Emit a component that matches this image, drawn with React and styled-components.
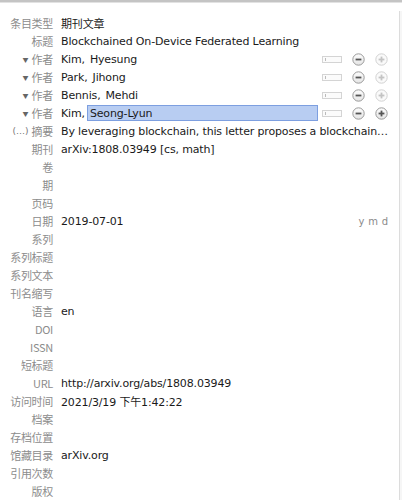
import styled, { createGlobalStyle } from 'styled-components';

const GlobalStyle = createGlobalStyle`
  html, body {
    margin: 0;
    padding: 0;
    background: #ffffff;
  }
  body {
    font-family: "DejaVu Sans", "Noto Sans CJK SC", sans-serif;
  }
`;

const fields = [
    { label: '条目类型', value: '期刊文章' },
    { label: '标题', value: 'Blockchained On-Device Federated Learning' },
    { label: '作者', creator: ['Kim,', 'Hyesung'] },
    { label: '作者', creator: ['Park,', 'Jihong'] },
    { label: '作者', creator: ['Bennis,', 'Mehdi'] },
    { label: '作者', creator: ['Kim,', 'Seong-Lyun'], editing: true, last: true },
    { label: '摘要', prefix: '(…)', value: 'By leveraging blockchain, this letter proposes a blockchain…' },
    { label: '期刊', value: 'arXiv:1808.03949 [cs, math]' },
    { label: '卷' },
    { label: '期' },
    { label: '页码' },
    { label: '日期', value: '2019-07-01', date: true },
    { label: '系列' },
    { label: '系列标题' },
    { label: '系列文本' },
    { label: '刊名缩写' },
    { label: '语言', value: 'en' },
    { label: 'DOI' },
    { label: 'ISSN' },
    { label: '短标题' },
    { label: 'URL', value: 'http://arxiv.org/abs/1808.03949' },
    { label: '访问时间', value: '2021/3/19 下午1:42:22' },
    { label: '档案' },
    { label: '存档位置' },
    { label: '馆藏目录', value: 'arXiv.org' },
    { label: '引用次数' },
    { label: '版权' },
];

const MinusIcon = () => (
    <svg width="13" height="13" viewBox="0 0 13 13">
        <defs>
            <linearGradient id="btnfill" x1="0" y1="0" x2="0" y2="1">
                <stop offset="0" stopColor="#fdfdfd" />
                <stop offset="1" stopColor="#e4e4e4" />
            </linearGradient>
        </defs>
        <circle cx="6.5" cy="6.5" r="5.7" fill="url(#btnfill)" stroke="#9a9a9a" strokeWidth="1" />
        <rect x="3.6" y="5.6" width="5.8" height="1.8" fill="#555" />
    </svg>
);

const PlusIcon = ({ active }) => (
    <svg width="13" height="13" viewBox="0 0 13 13">
        <circle cx="6.5" cy="6.5" r="5.7" fill={active ? 'url(#btnfill)' : '#fafafa'} stroke={active ? '#9a9a9a' : '#d2d2d2'} strokeWidth="1" />
        <rect x="3.6" y="5.6" width="5.8" height="1.8" fill={active ? '#555' : '#c4c4c4'} />
        <rect x="5.6" y="3.6" width="1.8" height="5.8" fill={active ? '#555' : '#c4c4c4'} />
    </svg>
);

export default function App() {
    return (
        <>
            <GlobalStyle />
            <TopBar />
            <Frame>
                <Pane>
                    {fields.map((f, i) => (
                        <Row key={i}>
                            <Label>
                                {f.creator && <Twisty>▼</Twisty>}
                                {f.prefix && <Prefix>{f.prefix}</Prefix>}
                                <LabelText>{f.label}</LabelText>
                            </Label>
                            <Value>
                                {f.creator ? (
                                    <>
                                        <LastName>{f.creator[0]}</LastName>
                                        <FirstName $editing={f.editing}>{f.creator[1]}</FirstName>
                                        <ModeBox />
                                        <IconButton><MinusIcon /></IconButton>
                                        <IconButton><PlusIcon active={f.last} /></IconButton>
                                    </>
                                ) : (
                                    <>
                                        <Text>{f.value}</Text>
                                        {f.date && <DateHint>y m d</DateHint>}
                                    </>
                                )}
                            </Value>
                        </Row>
                    ))}
                </Pane>
                <Gutter />
            </Frame>
        </>
    );
}

const TopBar = styled.div`
    height: 2px;
    background: #c4c4c4;
    border-bottom: 1px solid #e2e2e2;
`;

const Frame = styled.div`
    display: flex;
    width: 402px;
`;

const Pane = styled.div`
    width: 399px;
    padding-top: 11px;
    display: flex;
    flex-direction: column;
`;

const Gutter = styled.div`
    margin-top: 8px;
    width: 2px;
    border-left: 1px solid #dcdcdc;
    background: #f6f6f6;
`;

const Row = styled.div`
    display: flex;
    align-items: center;
    height: 18px;
`;

const Label = styled.div`
    width: 53px;
    flex: none;
    display: flex;
    justify-content: flex-end;
    align-items: center;
    color: #8c8c8c;
    font-size: 11px;
    font-family: "Noto Sans CJK SC", "DejaVu Sans", sans-serif;
    white-space: nowrap;
`;

const LabelText = styled.span`
    letter-spacing: -0.3px;
`;

const Twisty = styled.span`
    font-size: 6px;
    color: #666;
    margin-right: 3px;
`;

const Prefix = styled.span`
    font-family: "DejaVu Sans", sans-serif;
    font-size: 9px;
    color: #777;
    margin-right: 3px;
`;

const Value = styled.div`
    flex: 1;
    min-width: 0;
    display: flex;
    align-items: center;
    padding-left: 8px;
    padding-right: 11px;
    color: #1a1a1a;
    font-size: 11px;
    letter-spacing: -0.15px;
    font-family: "DejaVu Sans", "Noto Sans CJK SC", sans-serif;
`;

const Text = styled.span`
    flex: 1;
    white-space: nowrap;
`;

const DateHint = styled.span`
    color: #8a8a8a;
    font-size: 10px;
    word-spacing: 1px;
`;

const LastName = styled.span`
    margin-right: 2px;
`;

const FirstName = styled.span`
    flex: 1;
    height: 16px;
    line-height: 16px;
    padding-left: 2px;
    box-sizing: border-box;
    background: ${p => (p.$editing ? '#b8cdf2' : 'transparent')};
    border: 1px solid ${p => (p.$editing ? '#7d9fe0' : 'transparent')};
`;

const ModeBox = styled.span`
    position: relative;
    width: 20px;
    height: 7px;
    margin-left: 4px;
    margin-right: 10px;
    border: 1px solid #d4d4d4;
    background: #fbfbfb;
    box-sizing: border-box;
    &::before {
        content: '';
        position: absolute;
        left: 2px;
        top: 1px;
        width: 1px;
        height: 3px;
        background: #bbb;
    }
`;

const IconButton = styled.span`
    display: flex;
    width: 13px;
    height: 13px;
    & + & {
        margin-left: 10px;
    }
`;
